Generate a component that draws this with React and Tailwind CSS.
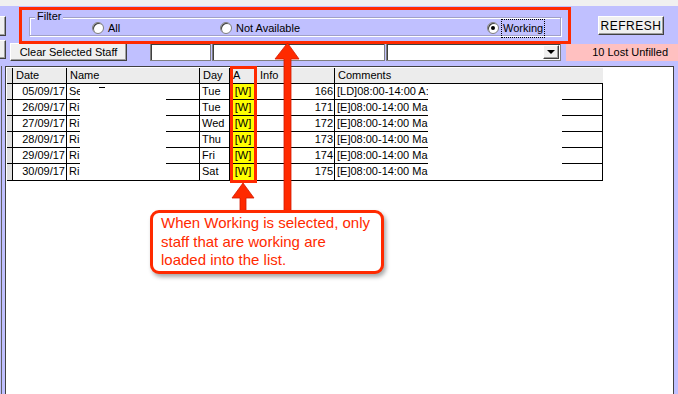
import React from "react";

const rows = [
  { date: "05/09/17", name: "Se", day: "Tue", num: 166, comment: "[LD]08:00-14:00 A:" },
  { date: "26/09/17", name: "Ri", day: "Tue", num: 171, comment: "[E]08:00-14:00 Ma" },
  { date: "27/09/17", name: "Ri", day: "Wed", num: 172, comment: "[E]08:00-14:00 Ma" },
  { date: "28/09/17", name: "Ri", day: "Thu", num: 173, comment: "[E]08:00-14:00 Ma" },
  { date: "29/09/17", name: "Ri", day: "Fri", num: 174, comment: "[E]08:00-14:00 Ma" },
  { date: "30/09/17", name: "Ri", day: "Sat", num: 175, comment: "[E]08:00-14:00 Ma" },
];

const Radio = ({ checked }) => (
  <span className="relative inline-block w-[12px] h-[12px] rounded-full bg-white border border-[#808080] shadow-[inset_1px_1px_0_#404040]">
    {checked && <span className="absolute left-[3px] top-[3px] w-[4px] h-[4px] rounded-full bg-black"></span>}
  </span>
);

const Btn = ({ children, className = "" }) => (
  <div
    className={`flex items-center justify-center bg-[#f0f0f0] border border-t-white border-l-white border-r-[#404040] border-b-[#404040] shadow-[inset_-1px_-1px_0_#a0a0a0] ${className}`}
  >
    {children}
  </div>
);

const App = () => {
  return (
    <div className="relative w-[678px] h-[394px] overflow-hidden bg-[#c0c0ff] text-[11px] text-black font-['Liberation_Sans',Arial,sans-serif]">
      <div className="h-[6px] bg-[#f0f0f0]"></div>

      {/* top row: filter group + refresh */}
      <div className="flex h-[37px]">
        <div className="w-[6px] pt-[10px]">
          <Btn className="h-[20px] w-[7px] -ml-[1px]"></Btn>
        </div>
        <div className="relative ml-[23px] mt-[11px] w-[532px] h-[19px] border border-[#a0a0c8] shadow-[1px_1px_0_white,inset_1px_1px_0_white]">
          <span className="absolute -top-[8px] left-[5px] px-[2px] bg-[#c0c0ff] leading-[13px]">Filter</span>
          <div className="absolute left-[62px] top-[2px] flex items-center gap-[4px]">
            <Radio />
            <span>All</span>
          </div>
          <div className="absolute left-[190px] top-[2px] flex items-center gap-[4px]">
            <Radio />
            <span>Not Available</span>
          </div>
          <div className="absolute left-[457px] top-[2px] flex items-center gap-[3px]">
            <Radio checked />
            <span className="px-[1px] outline outline-1 outline-dotted outline-black">Working</span>
          </div>
        </div>
        <Btn className="ml-[37px] mt-[10px] w-[66px] h-[19px] text-[12px] tracking-[0.5px]">REFRESH</Btn>
      </div>

      {/* second row */}
      <div className="flex h-[18px]">
        <div className="w-[6px] -mt-[3px]">
          <Btn className="h-[19px] w-[7px] -ml-[1px]"></Btn>
        </div>
        <Btn className="ml-[4px] w-[117px] h-[18px]">Clear Selected Staff</Btn>
        <div className="ml-[23px] w-[61px] h-[18px] bg-white border border-[#808080] shadow-[inset_1px_1px_0_#404040]"></div>
        <div className="ml-[1px] w-[173px] h-[18px] bg-white border border-[#808080] shadow-[inset_1px_1px_0_#404040]"></div>
        <div className="ml-[1px] w-[175px] h-[18px] bg-white border border-[#808080] shadow-[inset_1px_1px_0_#404040] flex justify-end p-[1px]">
          <Btn className="w-[16px] h-[14px]">
            <span className="block w-0 h-0 border-l-[4px] border-r-[4px] border-t-[4px] border-l-transparent border-r-transparent border-t-black"></span>
          </Btn>
        </div>
        <div className="ml-[5px] flex-1 h-[17px] mt-[1px] bg-[#ffc0c0] flex items-center justify-end pr-[10px]">10 Lost Unfilled</div>
      </div>

      {/* list panel */}
      <div className="flex h-[333px] mt-[5px]">
        <div className="w-[1px] ml-[1px] bg-[#606060]"></div>
        <div className="ml-[3px] w-[669px] h-full bg-white border-l border-t border-r border-[#404040] pt-[1px] pl-[1px]">
          <div className="w-[596px] grid grid-cols-[6px_54px_133px_30px_27px_78px_268px] border-b border-r border-black leading-[15px]">
            <div className="h-[16px] bg-[#e0e0e0] border-b border-r border-black"></div>
            <div className="h-[16px] bg-[#ececec] border-b border-r border-black pl-[3px]">Date</div>
            <div className="h-[16px] bg-[#ececec] border-b border-r border-black pl-[3px]">Name</div>
            <div className="h-[16px] bg-[#ececec] border-b border-r border-black pl-[3px]">Day</div>
            <div className="h-[16px] bg-[#ececec] border-b border-r border-black pl-[3px]">A</div>
            <div className="h-[16px] bg-[#ececec] border-b border-r border-black pl-[3px]">Info</div>
            <div className="h-[16px] bg-[#ececec] border-b border-black pl-[3px]">Comments</div>
            {rows.map((r, i) => (
              <React.Fragment key={r.date}>
                <div className={`h-[16px] bg-[#e0e0e0] border-r border-black ${i < rows.length - 1 ? "border-b" : ""}`}></div>
                <div className={`h-[16px] border-r border-black text-right pr-[1px] ${i < rows.length - 1 ? "border-b" : ""}`}>{r.date}</div>
                <div className={`h-[16px] border-r border-black pl-[2px] ${i < rows.length - 1 ? "border-b" : ""}`}>{r.name}</div>
                <div className={`h-[16px] border-r border-black pl-[2px] ${i < rows.length - 1 ? "border-b" : ""}`}>{r.day}</div>
                <div className={`h-[16px] border-r border-black ${i < rows.length - 1 ? "border-b" : ""}`}>
                  <div className="mx-[2px] h-full bg-[#ffff00] text-center">[W]</div>
                </div>
                <div className={`h-[16px] border-r border-black text-right pr-[1px] ${i < rows.length - 1 ? "border-b" : ""}`}>{r.num}</div>
                <div className={`h-[16px] border-black pl-[2px] ${i < rows.length - 1 ? "border-b" : ""}`}>{r.comment}</div>
              </React.Fragment>
            ))}
          </div>
        </div>
        <div className="flex-1"></div>
      </div>

      {/* redactions */}
      <div className="absolute left-[80px] top-[85px] w-[86px] h-[95px] bg-white">
        <div className="ml-[19px] mt-[2px] w-[6px] h-[1px] bg-black"></div>
      </div>
      <div className="absolute left-[428px] top-[85px] w-[134px] h-[95px] bg-white"></div>

      {/* annotation highlights */}
      <div className="absolute left-[19px] top-[7px] w-[552px] h-[37px] border-[3px] border-[#ff2a00]"></div>
      <div className="absolute left-[230px] top-[66px] w-[27px] h-[117px] border-[3px] border-[#ff2a00]"></div>

      <svg className="absolute left-0 top-0" width="678" height="394">
        <path d="M284 212 L284 59 L275 59 L287.5 43 L299 59 L291 59 L291 212 Z" fill="#ff2a00" stroke="#d21a00" strokeWidth="0.8" />
        <path d="M240 212 L240 198 L232 198 L243 183 L254 198 L246 198 L246 212 Z" fill="#ff2a00" stroke="#d21a00" strokeWidth="0.8" />
      </svg>

      <div className="absolute left-[150px] top-[210px] w-[234px] h-[64px] rounded-[9px] border-[3px] border-[#ff2a00] bg-white shadow-[2px_3px_4px_rgba(0,0,0,0.35)] pl-[8px] pt-[1px] text-[15px] leading-[18.5px] text-[#ff2a00] font-['Liberation_Sans',Helvetica,sans-serif]">
        <div>When Working is selected, only</div>
        <div>staff that are working are</div>
        <div>loaded into the list.</div>
      </div>
    </div>
  );
};

export default App;
